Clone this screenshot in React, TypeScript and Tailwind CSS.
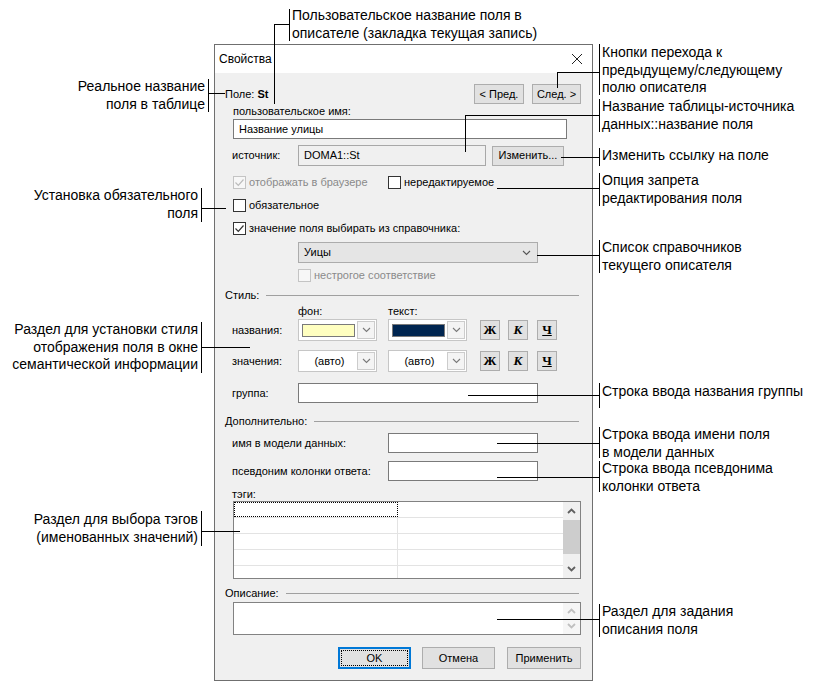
import type { ReactNode } from "react";

function Chev({ up = false, color = "#606060", bold = false }: { up?: boolean; color?: string; bold?: boolean }) {
  return (
    <svg width="9" height="6" viewBox="0 0 9 6">
      <path d={up ? "M1 5 L4.5 1.5 L8 5" : "M1 1 L4.5 4.5 L8 1"} stroke={color} strokeWidth={bold ? 1.8 : 1.1} fill="none" />
    </svg>
  );
}

function Check({ checked = false, disabled = false }: { checked?: boolean; disabled?: boolean }) {
  return (
    <span
      className={`w-[13px] h-[13px] shrink-0 border flex items-center justify-center ${
        disabled ? "border-[#c4c4c4] bg-[#f7f7f7]" : "border-[#333333] bg-white"
      }`}
    >
      {checked && (
        <svg width="11" height="11" viewBox="0 0 11 11">
          <path d="M1.5 5.5 L4.3 8.3 L9.5 2.5" stroke={disabled ? "#bcbcbc" : "#333333"} strokeWidth="1.2" fill="none" />
        </svg>
      )}
    </span>
  );
}

function Btn({ children, className = "" }: { children: ReactNode; className?: string }) {
  return (
    <div className={`flex items-center justify-center bg-[#e1e1e1] border border-[#adadad] ${className}`}>
      {children}
    </div>
  );
}

function ColorCombo({ swatch }: { swatch?: string }) {
  return (
    <div className="w-[79px] h-[22px] border border-[#c6c6c6] bg-white flex items-center pl-[3px] pr-[1px]">
      {swatch ? (
        <div className={`w-[53px] h-[13px] border border-[#7a7a7a] ${swatch}`} />
      ) : (
        <div className="w-[55px] text-center">(авто)</div>
      )}
      <div className="ml-auto w-[18px] h-[18px] border border-[#cccccc] bg-[#f4f4f4] flex items-center justify-center">
        <Chev color="#7a7a7a" />
      </div>
    </div>
  );
}

function FontButtons() {
  return (
    <div className="flex ml-[13px] font-['Liberation_Serif',serif] font-bold text-[13px]">
      <Btn className="w-[20px] h-[20px]">Ж</Btn>
      <Btn className="w-[20px] h-[20px] ml-[8px] italic">К</Btn>
      <Btn className="w-[20px] h-[20px] ml-[9px] underline">Ч</Btn>
    </div>
  );
}

function SectionTitle({ title, className }: { title: string; className: string }) {
  return (
    <div className={`h-[12px] flex items-center leading-[12px] pr-[2px] ${className}`}>
      <span>{title}</span>
      <div className="flex-1 h-px bg-[#a0a0a0] ml-[7px]" />
    </div>
  );
}

function Dialog() {
  return (
    <div className="w-[379px] border border-[#6f6f6f] bg-[#f0f0f0] text-[11px] text-black font-['Liberation_Sans',Arial,sans-serif]">
      <div className="h-[28px] bg-white flex items-center justify-between pl-[4px] pr-[9px]">
        <span className="text-[12px]">Свойства</span>
        <svg width="12" height="12" viewBox="0 0 12 12">
          <path d="M1 1 L11 11 M11 1 L1 11" stroke="#222" strokeWidth="1" />
        </svg>
      </div>
      <div className="pl-[10px] pr-[11px] pb-[11px]">
        <div className="mt-[11px] h-[20px] flex items-center justify-between">
          <span>
            Поле: <b>St</b>
          </span>
          <div className="flex gap-[8px]">
            <Btn className="w-[50px] h-[20px]">&lt; Пред.</Btn>
            <Btn className="w-[49px] h-[20px]">След. &gt;</Btn>
          </div>
        </div>
        <div className="h-[14px] leading-[14px] pl-[8px]">пользовательское имя:</div>
        <div className="mt-[1px] ml-[8px] w-[334px] h-[20px] bg-white border border-[#7a7a7a] flex items-center pl-[5px]">
          Название улицы
        </div>
        <div className="mt-[6px] h-[21px] flex items-center pl-[7px]">
          <span className="w-[66px]">источник:</span>
          <div className="w-[188px] h-[21px] border border-[#a8a8a8] bg-[#f0f0f0] flex items-center pl-[5px]">DOMA1::St</div>
          <Btn className="ml-[6px] w-[72px] h-[20px]">Изменить...</Btn>
        </div>
        <div className="mt-[10px] h-[13px] flex items-center pl-[8px]">
          <div className="w-[155px] flex items-center gap-[3px] text-[#8a8a8a]">
            <Check checked disabled />
            <span>отображать в браузере</span>
          </div>
          <div className="flex items-center gap-[3px]">
            <Check />
            <span>нередактируемое</span>
          </div>
        </div>
        <div className="mt-[10px] h-[13px] flex items-center gap-[3px] pl-[8px]">
          <Check />
          <span>обязательное</span>
        </div>
        <div className="mt-[9px] h-[14px] flex items-center gap-[3px] pl-[8px]">
          <Check checked />
          <span>значение поля выбирать из справочника:</span>
        </div>
        <div className="mt-[7px] ml-[73px] w-[240px] h-[21px] bg-[#e5e5e5] border border-[#acacac] flex items-center justify-between pl-[5px] pr-[6px]">
          <span>Уицы</span>
          <Chev color="#555" />
        </div>
        <div className="mt-[6px] h-[13px] ml-[73px] flex items-center gap-[3px] text-[#8a8a8a]">
          <Check disabled />
          <span>нестрогое соответствие</span>
        </div>
        <SectionTitle title="Стиль:" className="mt-[7px]" />
        <div className="mt-[4px] h-[12px] leading-[12px] flex pl-[73px]">
          <span className="w-[90px]">фон:</span>
          <span>текст:</span>
        </div>
        <div className="mt-[2px] h-[22px] flex items-center pl-[7px]">
          <span className="w-[66px]">названия:</span>
          <ColorCombo swatch="bg-[#ffffc0]" />
          <div className="ml-[11px]">
            <ColorCombo swatch="bg-[#002550]" />
          </div>
          <FontButtons />
        </div>
        <div className="mt-[9px] h-[22px] flex items-center pl-[7px]">
          <span className="w-[66px]">значения:</span>
          <ColorCombo />
          <div className="ml-[11px]">
            <ColorCombo />
          </div>
          <FontButtons />
        </div>
        <div className="mt-[11px] h-[20px] flex items-center pl-[7px]">
          <span className="w-[66px]">группа:</span>
          <div className="w-[240px] h-[20px] bg-white border border-[#7a7a7a]" />
        </div>
        <SectionTitle title="Дополнительно:" className="mt-[12px]" />
        <div className="mt-[6px] h-[20px] flex items-center pl-[7px]">
          <span className="w-[156px]">имя в модели данных:</span>
          <div className="w-[150px] h-[20px] bg-white border border-[#7a7a7a]" />
        </div>
        <div className="mt-[8px] h-[20px] flex items-center pl-[7px]">
          <span className="w-[156px]">псевдоним колонки ответа:</span>
          <div className="w-[150px] h-[20px] bg-white border border-[#7a7a7a]" />
        </div>
        <div className="mt-[7px] h-[12px] leading-[12px] pl-[7px]">тэги:</div>
        <div className="mt-[1px] ml-[8px] w-[348px] h-[78px] border border-[#828282] bg-white flex overflow-hidden">
          <div className="flex-1 flex flex-col">
            {[0, 1, 2, 3, 4].map((i) => (
              <div key={i} className="h-[16px] shrink-0 flex border-b border-[#e3e3e3]">
                <div
                  className={`w-[164px] h-full ${
                    i === 0 ? "border border-dotted border-black" : "border-r border-[#e3e3e3]"
                  }`}
                />
                <div className="flex-1" />
              </div>
            ))}
          </div>
          <div className="w-[17px] bg-[#f0f0f0] flex flex-col items-center">
            <div className="h-[18px] flex items-center justify-center">
              <Chev up bold color="#606060" />
            </div>
            <div className="w-[17px] h-[34px] bg-[#cdcdcd]" />
            <div className="flex-1 flex items-end pb-[6px]">
              <Chev bold color="#606060" />
            </div>
          </div>
        </div>
        <SectionTitle title="Описание:" className="mt-[8px]" />
        <div className="mt-[3px] ml-[8px] w-[348px] h-[33px] border border-[#828282] bg-white flex">
          <div className="flex-1" />
          <div className="w-[17px] bg-[#f6f6f6] flex flex-col items-center justify-between py-[5px]">
            <Chev up color="#c0c0c0" bold />
            <Chev color="#c0c0c0" bold />
          </div>
        </div>
        <div className="mt-[12px] h-[22px] flex justify-end">
          <div className="w-[73px] h-[22px] border-2 border-[#0078d7] bg-[#e1e1e1] p-[1px]">
            <div className="w-full h-full border border-dotted border-black flex items-center justify-center">OK</div>
          </div>
          <Btn className="ml-[11px] w-[73px] h-[22px]">Отмена</Btn>
          <Btn className="ml-[12px] w-[74px] h-[22px]">Применить</Btn>
        </div>
      </div>
    </div>
  );
}

function Note({ lines, className }: { lines: string[]; className: string }) {
  return (
    <div className={`absolute text-[14px] leading-[17.5px] text-black whitespace-nowrap ${className}`}>
      {lines.map((l) => (
        <div key={l}>{l}</div>
      ))}
    </div>
  );
}

export default function App() {
  return (
    <div className="relative w-[819px] h-[684px] overflow-hidden bg-white pt-[44px] pl-[214px] font-['Liberation_Sans',Arial,sans-serif]">
      <Dialog />

      {/* callout texts */}
      <Note className="left-[292px] top-[6px] leading-[18px]" lines={["Пользовательское название поля в", "описателе (закладка текущая запись)"]} />
      <Note className="right-[614px] top-[78px] text-right" lines={["Реальное название", "поля в таблице"]} />
      <Note className="right-[621px] top-[187px] text-right" lines={["Установка обязательного", "поля"]} />
      <Note className="right-[621px] top-[321px] text-right" lines={["Раздел для установки стиля", "отображения поля в окне", "семантической информации"]} />
      <Note className="right-[621px] top-[511px] text-right" lines={["Раздел для выбора тэгов", "(именованных значений)"]} />
      <Note className="left-[602px] top-[44px]" lines={["Кнопки перехода к", "предыдущему/следующему", "полю описателя"]} />
      <Note className="left-[602px] top-[98px]" lines={["Название таблицы-источника", "данных::название поля"]} />
      <Note className="left-[602px] top-[147px]" lines={["Изменить ссылку на поле"]} />
      <Note className="left-[602px] top-[172px]" lines={["Опция запрета", "редактирования поля"]} />
      <Note className="left-[602px] top-[239px]" lines={["Список справочников", "текущего описателя"]} />
      <Note className="left-[602px] top-[383px]" lines={["Строка ввода названия группы"]} />
      <Note className="left-[602px] top-[426px]" lines={["Строка ввода имени поля", "в модели данных"]} />
      <Note className="left-[602px] top-[460px]" lines={["Строка ввода псевдонима", "колонки ответа"]} />
      <Note className="left-[602px] top-[603px]" lines={["Раздел для задания", "описания поля"]} />

      {/* callout lines */}
      <div className="absolute left-[289px] top-[9px] w-px h-[32px] bg-black" />
      <div className="absolute left-[274px] top-[24px] w-[15px] h-px bg-black" />
      <div className="absolute left-[274px] top-[24px] w-px h-[80px] bg-black" />

      <div className="absolute left-[208px] top-[79px] w-px h-[33px] bg-black" />
      <div className="absolute left-[208px] top-[93px] w-[17px] h-px bg-black" />

      <div className="absolute left-[201px] top-[188px] w-px h-[34px] bg-black" />
      <div className="absolute left-[201px] top-[208px] w-[25px] h-px bg-black" />

      <div className="absolute left-[201px] top-[322px] w-px h-[51px] bg-black" />
      <div className="absolute left-[201px] top-[347px] w-[49px] h-px bg-black" />

      <div className="absolute left-[201px] top-[511px] w-px h-[35px] bg-black" />
      <div className="absolute left-[201px] top-[531px] w-[39px] h-px bg-black" />

      <div className="absolute left-[599px] top-[44px] w-px h-[51px] bg-black" />
      <div className="absolute left-[557px] top-[72px] w-[42px] h-px bg-black" />
      <div className="absolute left-[557px] top-[72px] w-px h-[16px] bg-black" />

      <div className="absolute left-[599px] top-[99px] w-px h-[33px] bg-black" />
      <div className="absolute left-[465px] top-[115px] w-[134px] h-px bg-black" />
      <div className="absolute left-[465px] top-[115px] w-px h-[37px] bg-black" />

      <div className="absolute left-[599px] top-[148px] w-px h-[18px] bg-black" />
      <div className="absolute left-[561px] top-[157px] w-[38px] h-px bg-black" />

      <div className="absolute left-[599px] top-[173px] w-px h-[33px] bg-black" />
      <div className="absolute left-[497px] top-[188px] w-[102px] h-px bg-black" />

      <div className="absolute left-[599px] top-[240px] w-px h-[33px] bg-black" />
      <div className="absolute left-[537px] top-[255px] w-[62px] h-px bg-black" />

      <div className="absolute left-[599px] top-[383px] w-px h-[25px] bg-black" />
      <div className="absolute left-[468px] top-[395px] w-[131px] h-px bg-black" />

      <div className="absolute left-[599px] top-[427px] w-px h-[31px] bg-black" />
      <div className="absolute left-[497px] top-[443px] w-[102px] h-px bg-black" />

      <div className="absolute left-[599px] top-[461px] w-px h-[31px] bg-black" />
      <div className="absolute left-[497px] top-[477px] w-[102px] h-px bg-black" />

      <div className="absolute left-[599px] top-[604px] w-px h-[33px] bg-black" />
      <div className="absolute left-[497px] top-[619px] w-[102px] h-px bg-black" />
    </div>
  );
}
